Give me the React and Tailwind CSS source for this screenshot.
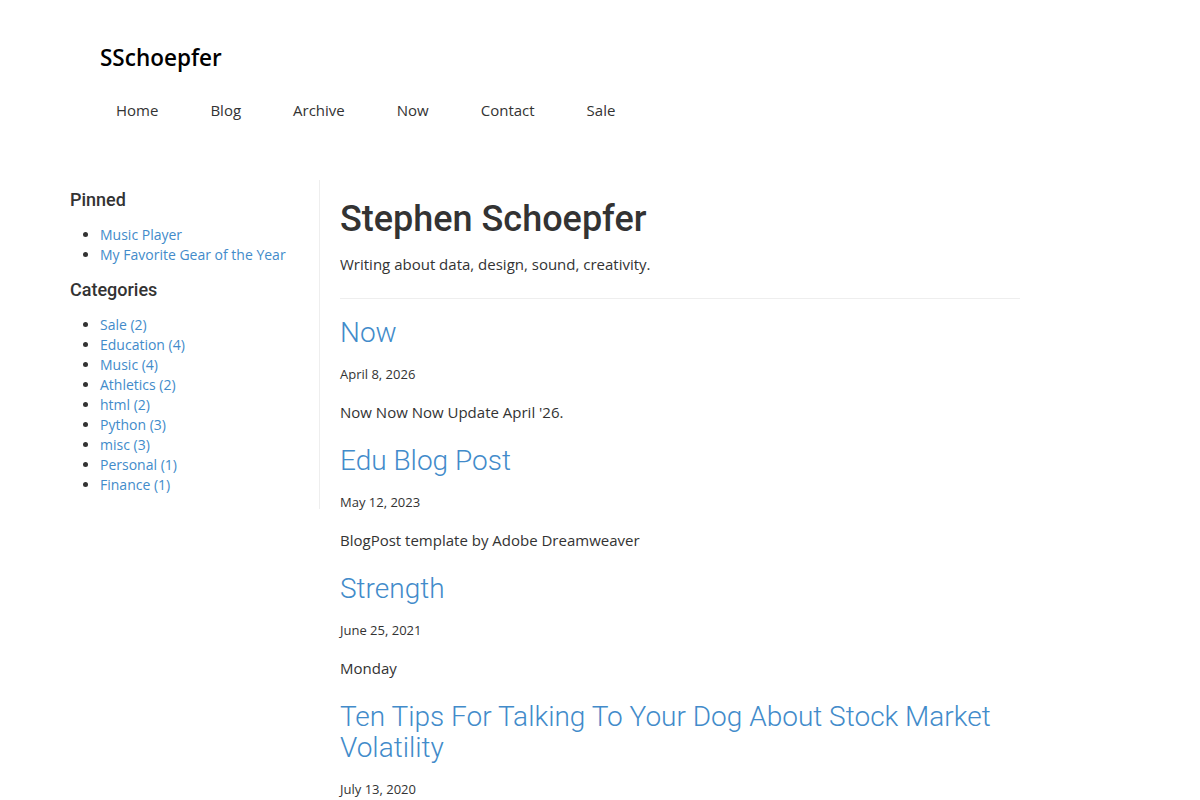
export default function App() {
  const pinned = ["Music Player", "My Favorite Gear of the Year"];
  const cats = [
    "Sale (2)",
    "Education (4)",
    "Music (4)",
    "Athletics (2)",
    "html (2)",
    "Python (3)",
    "misc (3)",
    "Personal (1)",
    "Finance (1)",
  ];
  const posts = [
    { t: "Now", d: "April 8, 2026", e: "Now Now Now Update April '26." },
    { t: "Edu Blog Post", d: "May 12, 2023", e: "BlogPost template by Adobe Dreamweaver" },
    { t: "Strength", d: "June 25, 2021", e: "Monday" },
    { t: "Ten Tips For Talking To Your Dog About Stock Market Volatility", d: "July 13, 2020", e: "" },
  ];
  const nav = ["Home", "Blog", "Archive", "Now", "Contact", "Sale"];
  const os = { fontFamily: '"Open Sans", sans-serif' };
  const rb = { fontFamily: 'Roboto, sans-serif' };
  return (
    <div className="w-[1200px] min-h-[800px] bg-white text-[#333]" style={os}>
      <header className="pt-[42px]">
        <div className="ml-[100px] text-[22.5px] leading-[32px] font-semibold text-black">SSchoepfer</div>
        <nav className="mt-[25px] ml-[116px] flex gap-[52px] text-[15px] leading-[22px] text-[#333]">
          {nav.map((n) => (
            <a key={n} href="#" className="text-[#333]">{n}</a>
          ))}
        </nav>
      </header>
      <div className="flex mt-[59px] pl-[70px]">
        <aside className="w-[250px] border-r border-[#eee] self-start pt-[9px] pb-[14px]">
          <h3 className="text-[18px] leading-[22px] font-medium text-[#333]" style={rb}>Pinned</h3>
          <ul className="mt-[14px] list-disc pl-[30px] text-[14px] leading-[20px]">
            {pinned.map((p) => (
              <li key={p}><a href="#" className="text-[#428bca]">{p}</a></li>
            ))}
          </ul>
          <h3 className="mt-[14px] text-[18px] leading-[22px] font-medium text-[#333]" style={rb}>Categories</h3>
          <ul className="mt-[14px] list-disc pl-[30px] text-[14px] leading-[20px]">
            {cats.map((p) => (
              <li key={p}><a href="#" className="text-[#428bca]">{p}</a></li>
            ))}
          </ul>
        </aside>
        <main className="w-[700px] pl-[20px]">
          <div className="w-[680px]">
            <h1 className="mt-[19px] text-[36px] leading-[40px] font-medium text-[#333]" style={rb}>Stephen Schoepfer</h1>
            <p className="mt-[14px] text-[15px] leading-[22px]">Writing about data, design, sound, creativity.</p>
            <hr className="mt-[23px] border-t border-[#eee]" />
            <div className="pt-[18px]">
              {posts.map((p) => (
                <article key={p.t} className="mb-[22px]">
                  <h2 className="text-[28px] leading-[31px] font-light text-[#428bca]" style={rb}>
                    <a href="#">{p.t}</a>
                  </h2>
                  <div className="mt-[17px] text-[13px] leading-[18px] text-[#333]">{p.d}</div>
                  {p.e && <p className="mt-[18px] text-[15px] leading-[22px]">{p.e}</p>}
                </article>
              ))}
            </div>
          </div>
        </main>
      </div>
    </div>
  );
}
